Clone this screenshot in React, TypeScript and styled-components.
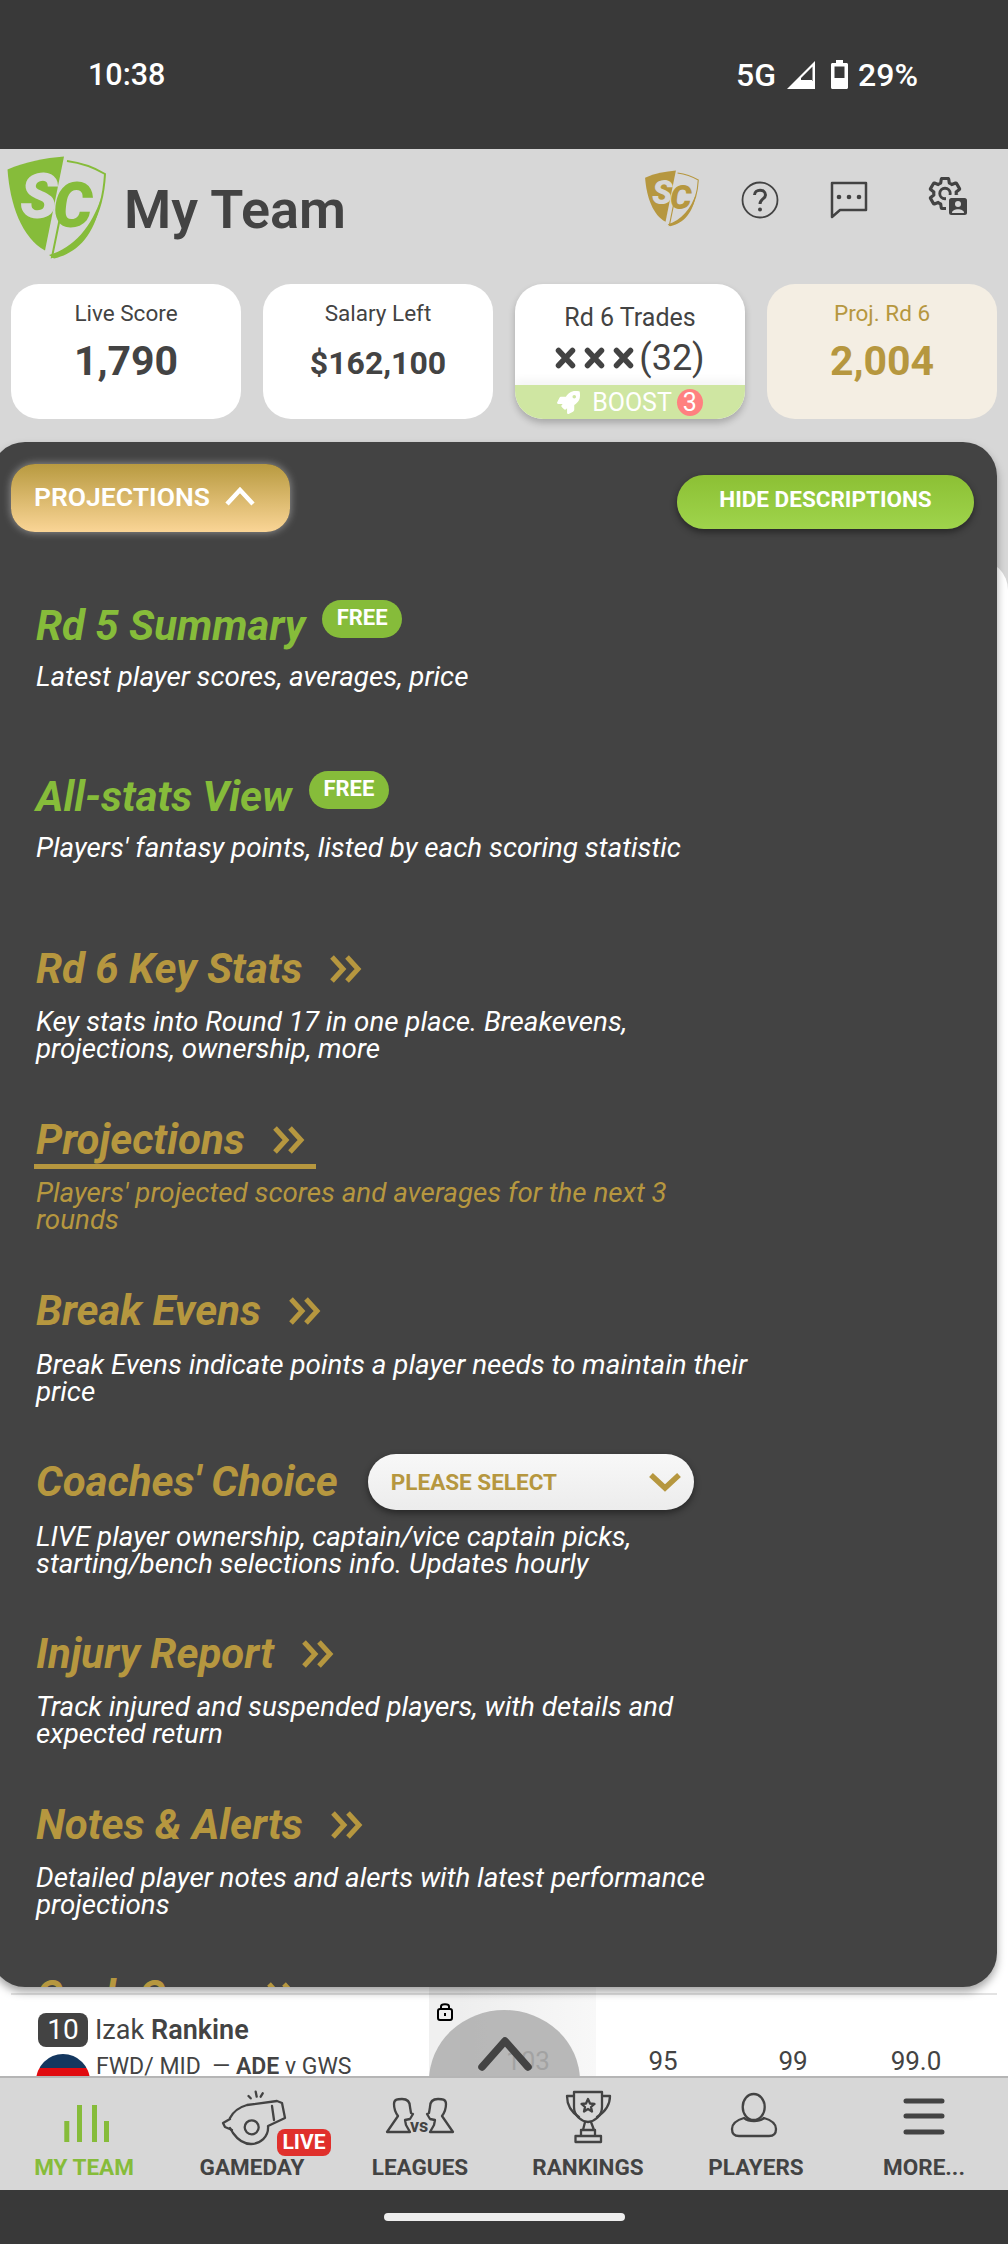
import React from 'react'
import styled, { createGlobalStyle } from 'styled-components'
import { FaRocket } from 'react-icons/fa'

const GREEN = '#86bc3a'
const GOLD = '#b6973f'
const DARK = '#434343'
const BAR = '#393939'
const PAGE = '#d7d7d7'

const GlobalStyle = createGlobalStyle`
    html, body {
        margin: 0;
        padding: 0;
        background: ${PAGE};
        font-family: Roboto, "Liberation Sans", sans-serif;
    }
    * { box-sizing: border-box; }
`

const Page = styled.div`
    width: 1008px;
    height: 2244px;
    display: flex;
    flex-direction: column;
    overflow: hidden;
    background: ${PAGE};
    color: ${DARK};
`

const StatusBar = styled.div`
    height: 149px;
    flex: none;
    background: ${BAR};
    color: #fff;
    display: flex;
    justify-content: space-between;
    align-items: center;
    padding: 0 90px 0 88px;
    font-size: 30.5px;
    font-weight: 500;
`

const StatusRight = styled.div`
    display: flex;
    align-items: center;
    font-size: 32px;
`

const StatusGlyph = styled.svg<{ $ml: number }>`
    margin-left: ${p => p.$ml}px;
`

const BatteryText = styled.span`
    margin-left: 10px;
`

const Header = styled.div`
    height: 135px;
    flex: none;
    display: flex;
    align-items: flex-start;
    padding-right: 40px;
`

const LogoMark = styled.svg<{ $mt: number }>`
    margin-top: ${p => p.$mt}px;
    flex: none;
`

const PageTitle = styled.h1`
    margin: 31px 0 0 14px;
    font-size: 54px;
    line-height: 60px;
    font-weight: 600;
    color: ${DARK};
`

const HeaderIcons = styled.div`
    margin: 18px 0 0 auto;
    height: 66px;
    display: flex;
    align-items: center;
`

const HeaderIcon = styled.svg<{ $ml?: number; $mt?: number }>`
    margin-left: ${p => p.$ml ?? 0}px;
    margin-top: ${p => p.$mt ?? 0}px;
    flex: none;
`

const CardRow = styled.div`
    height: 135px;
    flex: none;
    display: grid;
    grid-template-columns: repeat(4, 230px);
    column-gap: 22px;
    padding-left: 11px;
`

const Card = styled.div<{ $tint?: boolean; $raised?: boolean }>`
    height: 135px;
    border-radius: 28px;
    overflow: hidden;
    display: flex;
    flex-direction: column;
    align-items: center;
    background: ${p => (p.$tint ? '#f4eee3' : '#fff')};
    color: ${p => (p.$tint ? GOLD : DARK)};
    box-shadow: ${p => (p.$raised ? '0 4px 7px rgba(0,0,0,.22)' : 'none')};
`

const CardLabel = styled.div<{ $large?: boolean }>`
    margin-top: ${p => (p.$large ? 21 : 16)}px;
    font-size: ${p => (p.$large ? 25 : 22.5)}px;
    line-height: 26px;
`

const CardValue = styled.div<{ $small?: boolean }>`
    margin-top: ${p => (p.$small ? 13 : 11)}px;
    font-size: ${p => (p.$small ? 32 : 41)}px;
    line-height: 48px;
    font-weight: 700;
`

const TradeLine = styled.div`
    margin-top: 7px;
    height: 40px;
    display: flex;
    align-items: center;
    font-size: 36px;
    line-height: 40px;
`

const TradeMark = styled.svg`
    margin-right: 8px;
    flex: none;
`

const TradeCount = styled.span`
    margin-left: -3px;
`

const BoostStrip = styled.div`
    margin-top: auto;
    width: 100%;
    height: 34px;
    flex: none;
    background: #cfe6a2;
    color: #fff;
    display: flex;
    align-items: center;
    justify-content: center;
    font-size: 25px;
    box-shadow: 0 -6px 8px rgba(0,0,0,.04);
`

const BoostLabel = styled.span`
    margin-left: 12px;
`

const BoostCount = styled.span`
    margin-left: 5px;
    width: 26px;
    height: 27px;
    border-radius: 50%;
    background: #ff8080;
    display: flex;
    align-items: center;
    justify-content: center;
`

const Main = styled.div`
    position: relative;
    flex: 1;
    display: flex;
    flex-direction: column;
    padding-top: 141px;
`

const Sheet = styled.div`
    position: relative;
    flex: 1;
    background: #fff;
    border-radius: 30px 30px 0 0;
    overflow: hidden;
    display: flex;
    flex-direction: column;
    justify-content: flex-end;
`

const Panel = styled.div`
    position: absolute;
    z-index: 2;
    top: 23px;
    left: -9px;
    width: 1006px;
    height: 1545px;
    border-radius: 34px;
    overflow: hidden;
    background: ${DARK};
    box-shadow: 0 5px 9px rgba(0,0,0,.35);
`

const PanelTop = styled.div`
    height: 160px;
    display: flex;
    justify-content: space-between;
    align-items: flex-start;
    padding: 22px 23px 0 20px;
`

const ProjectionsButton = styled.div`
    width: 279px;
    height: 68px;
    border-radius: 24px;
    background: linear-gradient(180deg, #b89a40, #fad596);
    box-shadow: 0 0 9px rgba(255,255,255,.45);
    color: #fff;
    font-size: 26.5px;
    font-weight: 600;
    display: flex;
    align-items: center;
    padding: 0 0 4px 23px;
`

const ButtonChevron = styled.svg`
    margin-left: 15px;
`

const HideButton = styled.div`
    margin-top: 11px;
    width: 297px;
    height: 54px;
    border-radius: 27px;
    background: linear-gradient(180deg, #8cc034, #9fd44c);
    box-shadow: 0 3px 7px rgba(0,0,0,.45);
    color: #fff;
    font-size: 22.5px;
    font-weight: 700;
    display: flex;
    align-items: center;
    justify-content: center;
    padding-bottom: 7px;
`

const MenuRow = styled.div`
    height: 171.25px;
    padding-left: 45px;
`

const MenuTitle = styled.div<{ $free?: boolean; $active?: boolean }>`
    position: relative;
    display: inline-flex;
    align-items: center;
    height: 48px;
    padding-right: 11px;
    font-size: 42px;
    line-height: 48px;
    font-weight: 700;
    font-style: italic;
    white-space: nowrap;
    color: ${p => (p.$free ? GREEN : GOLD)};

    &:after {
        content: "";
        display: ${p => (p.$active ? 'block' : 'none')};
        position: absolute;
        left: -2px;
        right: 0;
        bottom: -5px;
        height: 5px;
        background: ${GOLD};
    }
`

const FreeBadge = styled.span`
    align-self: flex-start;
    margin: -2px 0 0 17px;
    width: 80px;
    height: 38px;
    border-radius: 19px;
    background: ${GREEN};
    color: #fff;
    font-size: 22px;
    line-height: 36px;
    font-weight: 700;
    font-style: normal;
    text-align: center;
`

const TitleChevrons = styled.svg`
    margin-left: 27px;
    flex: none;
`

const SelectBox = styled.div`
    margin-left: 30px;
    width: 326px;
    height: 56px;
    border-radius: 28px;
    background: linear-gradient(180deg, #f8f8f8, #ececec);
    box-shadow: 0 3px 7px rgba(0,0,0,.45);
    color: ${GOLD};
    font-size: 22.5px;
    line-height: 56px;
    font-weight: 700;
    font-style: normal;
    display: flex;
    align-items: center;
    justify-content: space-between;
    padding: 0 12px 0 23px;
`

const MenuText = styled.p<{ $active?: boolean; $gap: number }>`
    margin: ${p => p.$gap}px 0 0;
    max-width: 716px;
    font-size: 27.75px;
    line-height: 27px;
    font-style: italic;
    color: ${p => (p.$active ? GOLD : '#fff')};
`

const PlayerRow = styled.div`
    position: relative;
    height: 89px;
    flex: none;
    display: grid;
    grid-template-columns: 429px 31px 136px 134px 126px 120px 1fr;
    overflow: hidden;

    &:before {
        content: "";
        position: absolute;
        left: 11px;
        right: 11px;
        top: 6px;
        height: 2px;
        background: rgba(0,0,0,.11);
    }
`

const NameCell = styled.div`
    padding: 26px 0 0 38px;
`

const NameLine = styled.div`
    display: flex;
    align-items: center;
    height: 34px;
    font-size: 27px;
`

const NumberBadge = styled.span`
    width: 50px;
    height: 34px;
    border-radius: 8px;
    background: ${DARK};
    color: #fff;
    font-size: 28px;
    text-align: center;
    line-height: 34px;
    margin-right: 7px;
`

const Surname = styled.b`
    font-weight: 600;
    margin-left: 7px;
`

const InfoLine = styled.div`
    margin: 7px 0 0 -2px;
    display: flex;
    align-items: flex-start;
    font-size: 23px;
    line-height: 26px;
    white-space: nowrap;

    b { font-weight: 600; }
`

const ClubBadge = styled.span`
    width: 54px;
    height: 54px;
    border-radius: 50%;
    margin-right: 6px;
    flex: none;
    background: linear-gradient(180deg, #14375f 0 14px, #e10b10 14px 22px, #14375f 22px);
`

const LockCell = styled.div`
    background: #f0f0f0;
    padding: 16px 0 0 8px;
`

const ScoreCell = styled.div<{ $faded?: boolean }>`
    padding-top: 59px;
    text-align: center;
    font-size: 26px;
    line-height: 30px;
    background: ${p => (p.$faded ? 'linear-gradient(90deg, #eee, #f8f8f8)' : 'transparent')};
`

const ScrollTop = styled.div`
    position: absolute;
    z-index: 1;
    left: 429px;
    bottom: -76px;
    width: 151px;
    height: 142px;
    border-radius: 50%;
    background: rgba(175,175,175,.88);
    display: flex;
    justify-content: center;
    padding-top: 27px;
`

const BottomNav = styled.div`
    height: 114px;
    flex: none;
    border-top: 2px solid #b5b5b5;
    display: grid;
    grid-template-columns: repeat(6, 168px);
    position: relative;
    z-index: 3;
    background: ${PAGE};
`

const NavItem = styled.div<{ $active?: boolean }>`
    position: relative;
    display: flex;
    flex-direction: column;
    align-items: center;
    color: ${p => (p.$active ? GREEN : DARK)};
`

const NavIcon = styled.svg`
    margin-top: 3px;
    height: 70px;
    width: 70px;
    flex: none;
    fill: none;
    stroke: currentColor;
    stroke-width: 2.3;
    stroke-linejoin: round;
    stroke-linecap: round;
`

const NavLabel = styled.div`
    margin-top: 3px;
    font-size: 22.5px;
    line-height: 26px;
    font-weight: 700;
`

const LiveTag = styled.span`
    position: absolute;
    left: 109px;
    top: 51px;
    width: 54px;
    height: 27px;
    border-radius: 8px;
    background: #e0302c;
    color: #fff;
    font-size: 21px;
    line-height: 27px;
    font-weight: 700;
    text-align: center;
`

const HomeBar = styled.div`
    height: 54px;
    flex: none;
    background: ${BAR};
    display: flex;
    justify-content: center;
    padding-top: 23px;
    position: relative;
    z-index: 3;
`

const HomePill = styled.div`
    width: 241px;
    height: 8px;
    border-radius: 4px;
    background: #eee;
`

function Shield({ color, size, mt }: { color: string; size: number; mt: number }) {
    return (
        <LogoMark $mt={mt} width={size} height={size} viewBox="0 0 110 110">
            <path fill={color} d="M7.5 19.5C25 12 45 8 64 6.5L45 100.5C22 88 10 55 7.5 19.5Z" />
            <path fill="none" stroke={color} strokeWidth="2" d="M67 11C82 13 95 18 105 24C103 60 90 94 52 107L62 58" />
            <path fill={color} d="M49 105C74 98 92 76 101 48C96 84 78 103 54 108.5Z" />
            <text x="20" y="68" fontFamily="Roboto, sans-serif" fontSize="62" fontWeight="900" fontStyle="italic" fill={PAGE}>S</text>
            <text x="53" y="77" fontFamily="Roboto, sans-serif" fontSize="62" fontWeight="900" fontStyle="italic" fill={color}>C</text>
        </LogoMark>
    )
}

function DoubleChevron() {
    return (
        <TitleChevrons width="33" height="28" viewBox="0 0 33 28" fill="none" stroke={GOLD} strokeWidth="5">
            <path d="M3 2L14 14L3 26" />
            <path d="M18 2L29 14L18 26" />
        </TitleChevrons>
    )
}

type MenuEntry = {
    title: string
    text: string
    gap: number
    free?: boolean
    active?: boolean
    select?: boolean
}

const MENU: MenuEntry[] = [
    { title: 'Rd 5 Summary', text: 'Latest player scores, averages, price', gap: 12.5, free: true },
    { title: 'All-stats View', text: "Players' fantasy points, listed by each scoring statistic", gap: 12.5, free: true },
    { title: 'Rd 6 Key Stats', text: 'Key stats into Round 17 in one place. Breakevens, projections, ownership, more', gap: 15.5 },
    { title: 'Projections', text: "Players' projected scores and averages for the next 3 rounds", gap: 15.5, active: true },
    { title: 'Break Evens', text: 'Break Evens indicate points a player needs to maintain their price', gap: 15.5 },
    { title: "Coaches' Choice", text: 'LIVE player ownership, captain/vice captain picks, starting/bench selections info. Updates hourly', gap: 17, select: true },
    { title: 'Injury Report', text: 'Track injured and suspended players, with details and expected return', gap: 15.5 },
    { title: 'Notes & Alerts', text: 'Detailed player notes and alerts with latest performance projections', gap: 15.5 },
    { title: 'Cash Cows', text: '', gap: 0 },
]

function MenuItem({ entry }: { entry: MenuEntry }) {
    return (
        <MenuRow>
            <MenuTitle $free={entry.free} $active={entry.active}>
                {entry.title}
                {entry.free && <FreeBadge>FREE</FreeBadge>}
                {entry.select && (
                    <SelectBox>
                        PLEASE SELECT
                        <svg width="34" height="20" viewBox="0 0 34 20" fill="none" stroke={GOLD} strokeWidth="5.5">
                            <path d="M3 3L17 16L31 3" />
                        </svg>
                    </SelectBox>
                )}
                {!entry.free && !entry.select && <DoubleChevron />}
            </MenuTitle>
            {entry.text && <MenuText $active={entry.active} $gap={entry.gap}>{entry.text}</MenuText>}
        </MenuRow>
    )
}

function TradeX() {
    return (
        <TradeMark width="21" height="22" viewBox="0 0 21 22" fill="none" stroke={DARK} strokeWidth="5.5" strokeLinecap="round">
            <path d="M3.5 3.5L17.5 18.5M17.5 3.5L3.5 18.5" />
        </TradeMark>
    )
}

function App() {
    return (
        <Page>
            <GlobalStyle />
            <StatusBar>
                <span>10:38</span>
                <StatusRight>
                    <span>5G</span>
                    <StatusGlyph $ml={11} width="28" height="28" viewBox="0 0 28 28">
                        <path fill="#fff" d="M0 28L28 0V28H0ZM14 20H25.5V5.5L14 17Z" fillRule="evenodd" />
                        <path fill="#fff" d="M8 23H25V19H12Z" />
                    </StatusGlyph>
                    <StatusGlyph $ml={16} width="17" height="29" viewBox="0 0 17 29">
                        <path fill="#fff" fillRule="evenodd" d="M5 0H12V3H15.5C16.3 3 17 3.7 17 4.5V27.5C17 28.3 16.3 29 15.5 29H1.5C.7 29 0 28.3 0 27.5V4.5C0 3.7.7 3 1.5 3H5ZM3.5 6.5V18H13.5V6.5Z" />
                    </StatusGlyph>
                    <BatteryText>29%</BatteryText>
                </StatusRight>
            </StatusBar>

            <Header>
                <Shield color={GREEN} size={110} mt={1} />
                <PageTitle>My Team</PageTitle>
                <HeaderIcons>
                    <Shield color={GOLD} size={60} mt={-6} />
                    <HeaderIcon $ml={39} width="40" height="40" viewBox="0 0 40 40" fill="none" stroke={DARK}>
                        <circle cx="20" cy="20" r="17.5" strokeWidth="1.8" />
                        <path d="M14.5 15C14.5 8.5 25.5 8.5 25.5 15C25.5 19 20 19 20 24" strokeWidth="3" />
                        <circle cx="20" cy="29.5" r="2" fill={DARK} stroke="none" />
                    </HeaderIcon>
                    <HeaderIcon $ml={49} width="40" height="40" viewBox="0 0 40 40" fill="none" stroke={DARK}>
                        <path d="M3 3H37V30H11L3 37Z" strokeWidth="2.5" strokeLinejoin="round" />
                        <circle cx="10" cy="17" r="2.3" fill={DARK} stroke="none" />
                        <circle cx="20" cy="17" r="2.3" fill={DARK} stroke="none" />
                        <circle cx="30" cy="17" r="2.3" fill={DARK} stroke="none" />
                    </HeaderIcon>
                    <HeaderIcon $ml={59} $mt={-6} width="40" height="40" viewBox="0 0 40 40" fill="none">
                        <g transform="translate(-1 -1.5) scale(1.5)">
                            <path stroke={DARK} strokeWidth="2.1" strokeLinejoin="round" d="M19.43 12.98c.04-.32.07-.64.07-.98 0-.34-.03-.66-.07-.98l2.11-1.65c.19-.15.24-.42.12-.64l-2-3.46c-.09-.16-.26-.25-.44-.25-.06 0-.12.01-.17.03l-2.49 1c-.52-.4-1.08-.73-1.69-.98l-.38-2.65C14.46 2.18 14.25 2 14 2h-4c-.25 0-.46.18-.49.42l-.38 2.65c-.61.25-1.17.59-1.69.98l-2.49-1c-.06-.02-.12-.03-.18-.03-.17 0-.34.09-.43.25l-2 3.46c-.13.22-.07.49.12.64l2.11 1.65c-.04.32-.07.65-.07.98 0 .33.03.66.07.98l-2.11 1.65c-.19.15-.24.42-.12.64l2 3.46c.09.16.26.25.44.25.06 0 .12-.01.17-.03l2.49-1c.52.4 1.08.73 1.69.98l.38 2.65c.03.24.24.42.49.42h4c.25 0 .46-.18.49-.42l.38-2.65c.61-.25 1.17-.59 1.69-.98l2.49 1c.06.02.12.03.18.03.17 0 .34-.09.43-.25l2-3.46c.12-.22.07-.49-.12-.64l-2.11-1.65z" />
                            <circle cx="12" cy="12" r="3.5" stroke={DARK} strokeWidth="1.9" />
                        </g>
                        <rect x="18" y="18" width="24" height="24" fill={PAGE} />
                        <rect x="21" y="21" width="18" height="17" rx="2.5" fill={DARK} />
                        <circle cx="30" cy="27" r="3" fill={PAGE} />
                        <path fill={PAGE} d="M24 36C24 31 36 31 36 36Z" />
                    </HeaderIcon>
                </HeaderIcons>
            </Header>

            <CardRow>
                <Card>
                    <CardLabel>Live Score</CardLabel>
                    <CardValue>1,790</CardValue>
                </Card>
                <Card>
                    <CardLabel>Salary Left</CardLabel>
                    <CardValue $small>$162,100</CardValue>
                </Card>
                <Card $raised>
                    <CardLabel $large>Rd 6 Trades</CardLabel>
                    <TradeLine>
                        <TradeX />
                        <TradeX />
                        <TradeX />
                        <TradeCount>(32)</TradeCount>
                    </TradeLine>
                    <BoostStrip>
                        <FaRocket size={23} color="#fff" />
                        <BoostLabel>BOOST</BoostLabel>
                        <BoostCount>3</BoostCount>
                    </BoostStrip>
                </Card>
                <Card $tint>
                    <CardLabel>Proj. Rd 6</CardLabel>
                    <CardValue>2,004</CardValue>
                </Card>
            </CardRow>

            <Main>
                <Panel>
                    <PanelTop>
                        <ProjectionsButton>
                            PROJECTIONS
                            <ButtonChevron width="30" height="20" viewBox="0 0 30 20" fill="none" stroke="#fff" strokeWidth="4.5">
                                <path d="M2 18L15 4L28 18" />
                            </ButtonChevron>
                        </ProjectionsButton>
                        <HideButton>HIDE DESCRIPTIONS</HideButton>
                    </PanelTop>
                    {MENU.map(entry => <MenuItem key={entry.title} entry={entry} />)}
                </Panel>

                <Sheet>
                    <PlayerRow>
                        <NameCell>
                            <NameLine>
                                <NumberBadge>10</NumberBadge>
                                Izak<Surname>Rankine</Surname>
                            </NameLine>
                            <InfoLine>
                                <ClubBadge />
                                <span>FWD/ MID&nbsp;&nbsp;—&nbsp;<b>ADE</b> v GWS</span>
                            </InfoLine>
                        </NameCell>
                        <LockCell>
                            <svg width="16" height="18" viewBox="0 0 16 18" fill="none" stroke="#000" strokeWidth="2">
                                <rect x="1" y="6" width="14" height="11" rx="2" />
                                <path d="M4 6V3.5C4 .5 12 .5 12 3.5V6" />
                                <path d="M8 10V13" />
                            </svg>
                        </LockCell>
                        <ScoreCell $faded>103</ScoreCell>
                        <ScoreCell>95</ScoreCell>
                        <ScoreCell>99</ScoreCell>
                        <ScoreCell>99.0</ScoreCell>
                    </PlayerRow>
                    <ScrollTop>
                        <svg width="54" height="34" viewBox="0 0 54 34" fill="none" stroke={DARK} strokeWidth="7.5" strokeLinecap="round" strokeLinejoin="round">
                            <path d="M4 30L27 4L50 30" />
                        </svg>
                    </ScrollTop>
                </Sheet>
            </Main>

            <BottomNav>
                <NavItem $active>
                    <NavIcon viewBox="0 0 70 70">
                        <path strokeWidth="5" strokeLinecap="butt" d="M17.8 40V61M30.5 24V61M45.5 24V61M57.5 40V61" />
                    </NavIcon>
                    <NavLabel>MY TEAM</NavLabel>
                </NavItem>
                <NavItem>
                    <NavIcon viewBox="0 0 70 70">
                        <path d="M13 37C17 29 23 26 30 24L60 20L65 22L68 37L51 45C52 56 43 63 34 63C26 63 21 59 16 52L13 47" />
                        <path d="M13 38L6 42L8 46L15 49" />
                        <circle cx="34.7" cy="46.3" r="7" />
                        <path d="M55 25L57 39M31.5 15L33.7 17.3M38.7 10.7L39.7 15.7M45.7 12.3L43.7 15.7" />
                    </NavIcon>
                    <LiveTag>LIVE</LiveTag>
                    <NavLabel>GAMEDAY</NavLabel>
                </NavItem>
                <NavItem>
                    <NavIcon viewBox="0 0 70 70">
                        <path d="M2 51L13 35C10 31 9 28 9 23C9 18 13 18 17 18C22 18 25 20 25 26L26 32L28 33L25 38L20 39L21 44L25 51Z" />
                        <path d="M68 51L57 35C60 31 61 28 61 23C61 18 57 18 53 18C48 18 45 20 45 26L44 32L42 33L45 38L50 39L49 44L45 51Z" />
                        <text x="25" y="51" fontFamily="Roboto, sans-serif" fontSize="18" fontWeight="700" fill="currentColor" stroke="none">vs</text>
                    </NavIcon>
                    <NavLabel>LEAGUES</NavLabel>
                </NavItem>
                <NavItem>
                    <NavIcon viewBox="0 0 70 70">
                        <path d="M21 11H49V26C49 35 42 40 35 41C28 40 21 35 21 26Z" />
                        <path d="M21 15H14C14 24 18 31 26 36M49 15H57C57 24 52 31 44 36" />
                        <path d="M32 41L30 49M38 41L41 49M28 49H42V55H28ZM22.5 55H48V61H22.5Z" />
                        <path d="M35 18L37 22.5L41.5 23L38 26L39 30.5L35 28L31 30.5L32 26L28.5 23L33 22.5Z" />
                    </NavIcon>
                    <NavLabel>RANKINGS</NavLabel>
                </NavItem>
                <NavItem>
                    <NavIcon viewBox="0 0 70 70">
                        <ellipse cx="32.7" cy="26" rx="11" ry="13" />
                        <path d="M23 37C16 39 11 42 11 48C11 53 14 55 18 55H48C52 55 55 53 55 48C55 42 50 39 43 37C38 41 28 41 23 37Z" />
                    </NavIcon>
                    <NavLabel>PLAYERS</NavLabel>
                </NavItem>
                <NavItem>
                    <NavIcon viewBox="0 0 70 70">
                        <path strokeWidth="5" d="M17 20H53M17 35H53M17 51H53" />
                    </NavIcon>
                    <NavLabel>MORE...</NavLabel>
                </NavItem>
            </BottomNav>

            <HomeBar>
                <HomePill />
            </HomeBar>
        </Page>
    )
}

export default App
